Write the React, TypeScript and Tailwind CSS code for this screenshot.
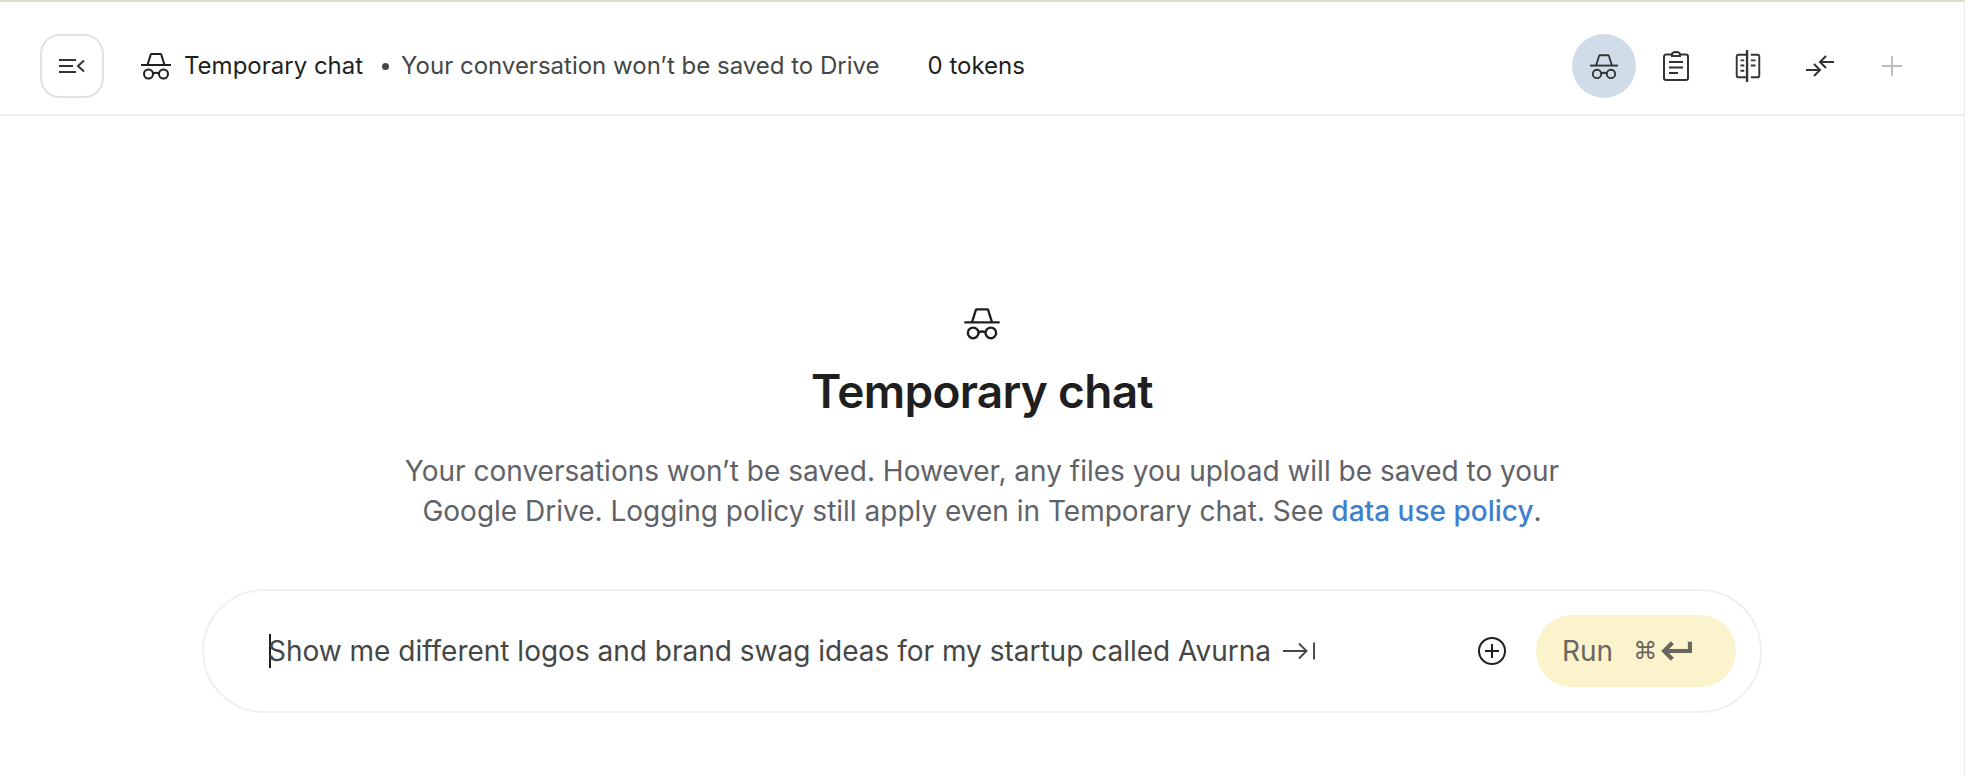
const HatIcon = ({ className }: { className: string }) => (
  <svg viewBox="0 0 30 28" fill="none" stroke="currentColor" strokeWidth="2" className={className}>
    <path d="M0 13h30" />
    <path d="M6.500 13 9.800 2.500c.2-.4.400-.5.800-.5h8.800c.4 0 .6.100.8.500L23.500 13" />
    <circle cx="7.500" cy="22" r="4.500" />
    <circle cx="22.500" cy="22" r="4.500" />
    <path d="M12 21.500c2-1 4-1 6 0" />
  </svg>
);

const ToolIcon = ({ children, muted }: { children: React.ReactNode; muted?: boolean }) => (
  <div className={`flex h-[64px] w-[64px] items-center justify-center rounded-full ${muted ? 'text-[#bdbdbd]' : 'text-[#333333]'}`}>
    {children}
  </div>
);

export default function App() {
  return (
    <div className="h-[776px] w-[1968px] overflow-hidden bg-white font-['Inter',sans-serif]">
      <div className="h-[776px] w-[1965px] border-t-2 border-r border-t-[#dcdcd0] border-r-[#eeeeee]">
        <header className="flex h-[114px] items-center border-b-2 border-[#eeeeee] pt-[16px] pl-[40px] pr-[40px]">
          <button className="flex h-[64px] w-[64px] items-center justify-center rounded-[20px] border-2 border-[#e2e2e2] text-[#333333]">
            <svg viewBox="0 0 26 16" fill="none" stroke="currentColor" strokeWidth="2" className="h-[16px] w-[26px]">
              <path d="M0 2h17M0 8h14M0 14h17M25 2.500 19 8l6 5.500" />
            </svg>
          </button>
          <HatIcon className="ml-[37px] h-[28px] w-[30px] text-[#1f1f1f]" />
          <span className="ml-[13px] text-[24px] text-[#1f1f1f]">Temporary chat</span>
          <span className="ml-[19px] h-[7px] w-[7px] rounded-full bg-[#444746]" />
          <span className="ml-[12px] text-[24px] text-[#444746]">Your conversation won’t be saved to Drive</span>
          <span className="ml-[48px] text-[24px] text-[#1f1f1f]">0 tokens</span>
          <div className="ml-auto flex items-center gap-[8px]">
            <div className="flex h-[64px] w-[64px] items-center justify-center rounded-full bg-[#d0dce8] text-[#333333]">
              <HatIcon className="h-[27px] w-[28px]" />
            </div>
            <ToolIcon>
              <svg viewBox="0 0 26 30" fill="none" stroke="currentColor" strokeWidth="2" className="h-[30px] w-[26px]">
                <path d="M9 3.500H3a2 2 0 0 0-2 2V27a2 2 0 0 0 2 2h20a2 2 0 0 0 2-2V5.500a2 2 0 0 0-2-2h-6" />
                <path d="M9 5V3.500a4 2.500 0 0 1 8 0V5z" />
                <path d="M6 11h14M6 16.500h14M6 22h9" />
              </svg>
            </ToolIcon>
            <ToolIcon>
              <svg viewBox="0 0 26 34" fill="none" stroke="currentColor" strokeWidth="2" className="h-[32px] w-[26px]">
                <path d="M12 5H3a2 2 0 0 0-2 2v20a2 2 0 0 0 2 2h9M16 5h7a2 2 0 0 1 2 2v20a2 2 0 0 1-2 2h-7" />
                <path d="M12 0v34" strokeWidth="2.500" />
                <path d="M5 11h4M5 16.500h4M5 22h4M16 11h5M16 16.500h5" />
              </svg>
            </ToolIcon>
            <ToolIcon>
              <svg viewBox="0 0 30 26" fill="none" stroke="currentColor" strokeWidth="2" className="h-[26px] w-[30px]">
                <path d="M1 17h14M9 11l6 6-6 6M29 9H15M21 3l-6 6 6 6" />
              </svg>
            </ToolIcon>
            <ToolIcon muted>
              <svg viewBox="0 0 20 20" fill="none" stroke="currentColor" strokeWidth="2" className="h-[20px] w-[20px]">
                <path d="M10 0v20M0 10h20" />
              </svg>
            </ToolIcon>
          </div>
        </header>

        <main className="flex flex-col items-center pt-[191px]">
          <HatIcon className="h-[33px] w-[36px] text-[#1f1f1f]" />
          <h1 className="mt-[21px] text-[46px] leading-[60px] font-semibold tracking-[-0.7px] text-[#1f1f1f]">Temporary chat</h1>
          <p className="mt-[30px] w-[1300px] text-center text-[28px] leading-[40px] text-[#5f6368]">
            Your conversations won’t be saved. However, any files you upload will be saved to your
            <br />
            Google Drive. Logging policy still apply even in Temporary chat. See{' '}
            <a className="font-medium text-[#3f7fd0]">data use policy</a>.
          </p>
          <div className="mt-[58px] flex h-[124px] w-[1560px] items-center rounded-[62px] border-2 border-[#f0f0f0] pl-[65px] pr-[24px]">
            <div className="flex items-center text-[28px] text-[#444746]">
              <span className="-mr-[3px] h-[34px] w-[2px] bg-[#1f1f1f]" />
              <span>Show me different logos and brand swag ideas for my startup called Avurna</span>
              <svg viewBox="0 0 34 20" fill="none" stroke="currentColor" strokeWidth="2" className="ml-[12px] h-[20px] w-[32px]">
                <path d="M0 10h24M17 2l8 8-8 8M33 1v18" />
              </svg>
            </div>
            <svg viewBox="0 0 30 30" fill="none" stroke="#1f1f1f" strokeWidth="2" className="ml-auto h-[30px] w-[30px]">
              <circle cx="15" cy="15" r="13" />
              <path d="M15 8v14M8 15h14" />
            </svg>
            <button className="ml-[29px] flex h-[72px] w-[200px] items-center rounded-full bg-[#fbf3cb] pl-[26px] text-[28px] text-[#6b6660]">
              Run
              <span className="ml-[20px] text-[24px] font-['DejaVu_Sans',sans-serif]">⌘</span>
              <svg viewBox="0 0 30 20" fill="none" stroke="currentColor" strokeWidth="4" className="ml-[4px] h-[22px] w-[31px]">
                <path d="M28 1v9H4M11 2l-8 8 8 8" />
              </svg>
            </button>
          </div>
        </main>
      </div>
    </div>
  );
}
